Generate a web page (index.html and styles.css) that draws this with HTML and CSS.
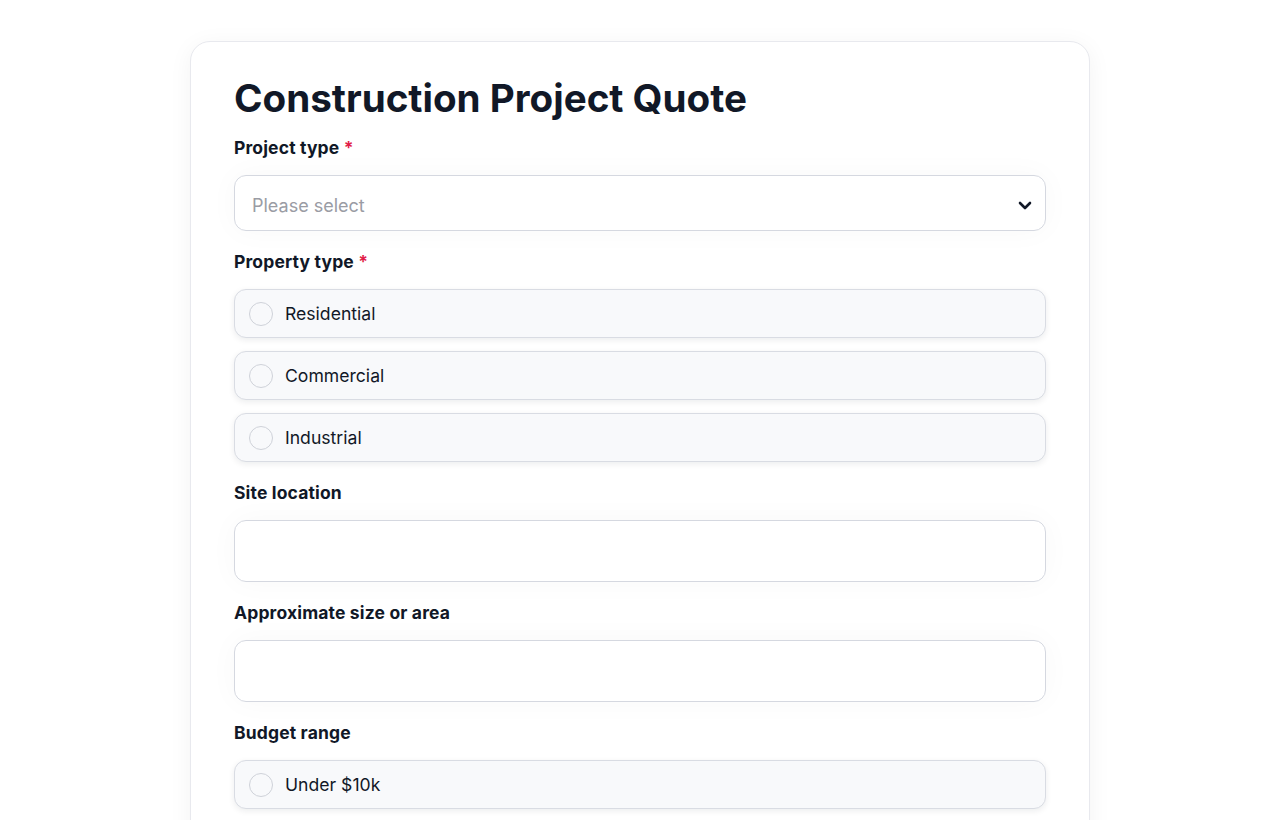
FILE: index.html
```html
<!DOCTYPE html>
<html lang="en">
<head>
    <meta charset="UTF-8">
    <meta name="viewport" content="width=device-width, initial-scale=1.0">
    <title>Construction Project Quote</title>
    <link rel="stylesheet" href="styles.css">
</head>
<body>
    <div class="card">
        <h1>Construction Project Quote</h1>

        <div class="field">
            <div class="label">Project type <span class="req">*</span></div>
            <div class="select">
                <span class="placeholder">Please select</span>
                <svg class="chevron" width="16" height="16" viewBox="0 0 16 16">
                    <path d="M3 6l5 5 5-5" fill="none" stroke="#111827" stroke-width="2.6" stroke-linecap="round" stroke-linejoin="round"/>
                </svg>
            </div>
        </div>

        <div class="field">
            <div class="label">Property type <span class="req">*</span></div>
            <div class="options">
                <div class="option"><span class="radio"></span>Residential</div>
                <div class="option"><span class="radio"></span>Commercial</div>
                <div class="option"><span class="radio"></span>Industrial</div>
            </div>
        </div>

        <div class="field">
            <div class="label">Site location</div>
            <div class="input"></div>
        </div>

        <div class="field">
            <div class="label">Approximate size or area</div>
            <div class="input"></div>
        </div>

        <div class="field">
            <div class="label">Budget range</div>
            <div class="options">
                <div class="option"><span class="radio"></span>Under $10k</div>
            </div>
        </div>
    </div>
</body>
</html>
```
FILE: styles.css
```css
body {
    margin: 0;
    background: #ffffff;
    font-family: Inter, "Noto Sans", sans-serif;
    color: #111827;
}
.card {
    width: 900px;
    box-sizing: border-box;
    margin: 41px auto 0;
    padding: 32px 43px 40px;
    background: #ffffff;
    border: 1px solid #e8e9ee;
    border-radius: 20px;
    box-shadow: 0 4px 24px rgba(17, 24, 39, 0.05);
}
h1 {
    margin: 0 0 14px;
    font-size: 38.6px;
    line-height: 48px;
    font-weight: 700;
}
.field {
    margin-bottom: 19px;
}
.label {
    font-size: 17.5px;
    line-height: 24px;
    font-weight: 700;
    letter-spacing: 0.15px;
    margin-bottom: 15px;
}
.req { color: #e11d48; }
.select {
    height: 56px;
    box-sizing: border-box;
    border: 1px solid #d5d8e0;
    border-radius: 12px;
    display: flex;
    align-items: center;
    justify-content: space-between;
    padding: 4px 12px 0 17px;
    box-shadow: 0 0 30px rgba(17, 24, 39, 0.03);
}
.placeholder {
    font-size: 18px;
    color: #9a9ca4;
}
.options {
    display: flex;
    flex-direction: column;
    gap: 13px;
}
.option {
    height: 49px;
    box-sizing: border-box;
    display: flex;
    align-items: center;
    gap: 12px;
    padding-left: 14px;
    border: 1px solid #d9dce3;
    border-radius: 12px;
    background: #f8f9fb;
    box-shadow: 0 2px 6px rgba(17, 24, 39, 0.08);
    font-size: 17.6px;
}
.radio {
    width: 22px;
    height: 22px;
    border: 1px solid #cfd2d9;
    border-radius: 50%;
    background: #f8f9fb;
}
.input {
    height: 62px;
    box-sizing: border-box;
    border: 1px solid #d5d8e0;
    border-radius: 12px;
    box-shadow: 0 0 30px rgba(17, 24, 39, 0.03);
}
```
